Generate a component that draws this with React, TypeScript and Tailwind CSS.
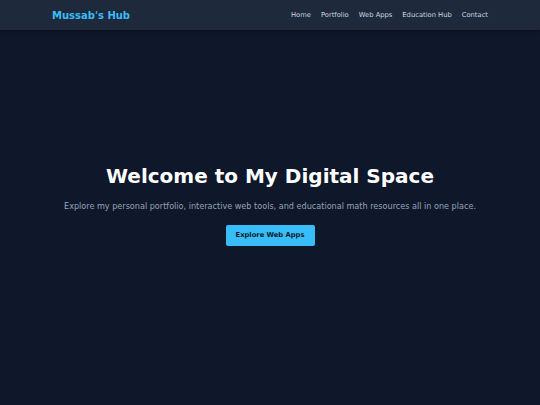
export default function App() {
  return (
    <div
      className="flex min-h-screen flex-col bg-[#0f172a]"
      style={{ fontFamily: '"DejaVu Sans", Verdana, sans-serif' }}
    >
      <header className="flex h-[30px] items-center justify-between bg-[#1e293b] px-[52px] shadow-[0_1px_3px_rgba(0,0,0,0.4)]">
        <div className="text-[10px] font-bold text-[#38bdf8]">Mussab's Hub</div>
        <nav className="flex gap-[10px] text-[6.75px] text-[#cbd5e1]">
          <a>Home</a>
          <a>Portfolio</a>
          <a>Web Apps</a>
          <a>Education Hub</a>
          <a>Contact</a>
        </nav>
      </header>

      <main className="flex flex-col items-center pt-[134px] text-center">
        <h1 className="text-[20px] font-bold leading-[24px] text-white">Welcome to My Digital Space</h1>
        <p className="mt-[12px] text-[8.1px] leading-[12px] text-[#94a3b8]">
          Explore my personal portfolio, interactive web tools, and educational math resources all in one place.
        </p>
        <button className="mt-[13px] h-[21px] w-[89px] rounded-[2px] bg-[#38bdf8] text-[6.75px] font-bold text-[#0f172a]">
          Explore Web Apps
        </button>
      </main>
    </div>
  )
}
